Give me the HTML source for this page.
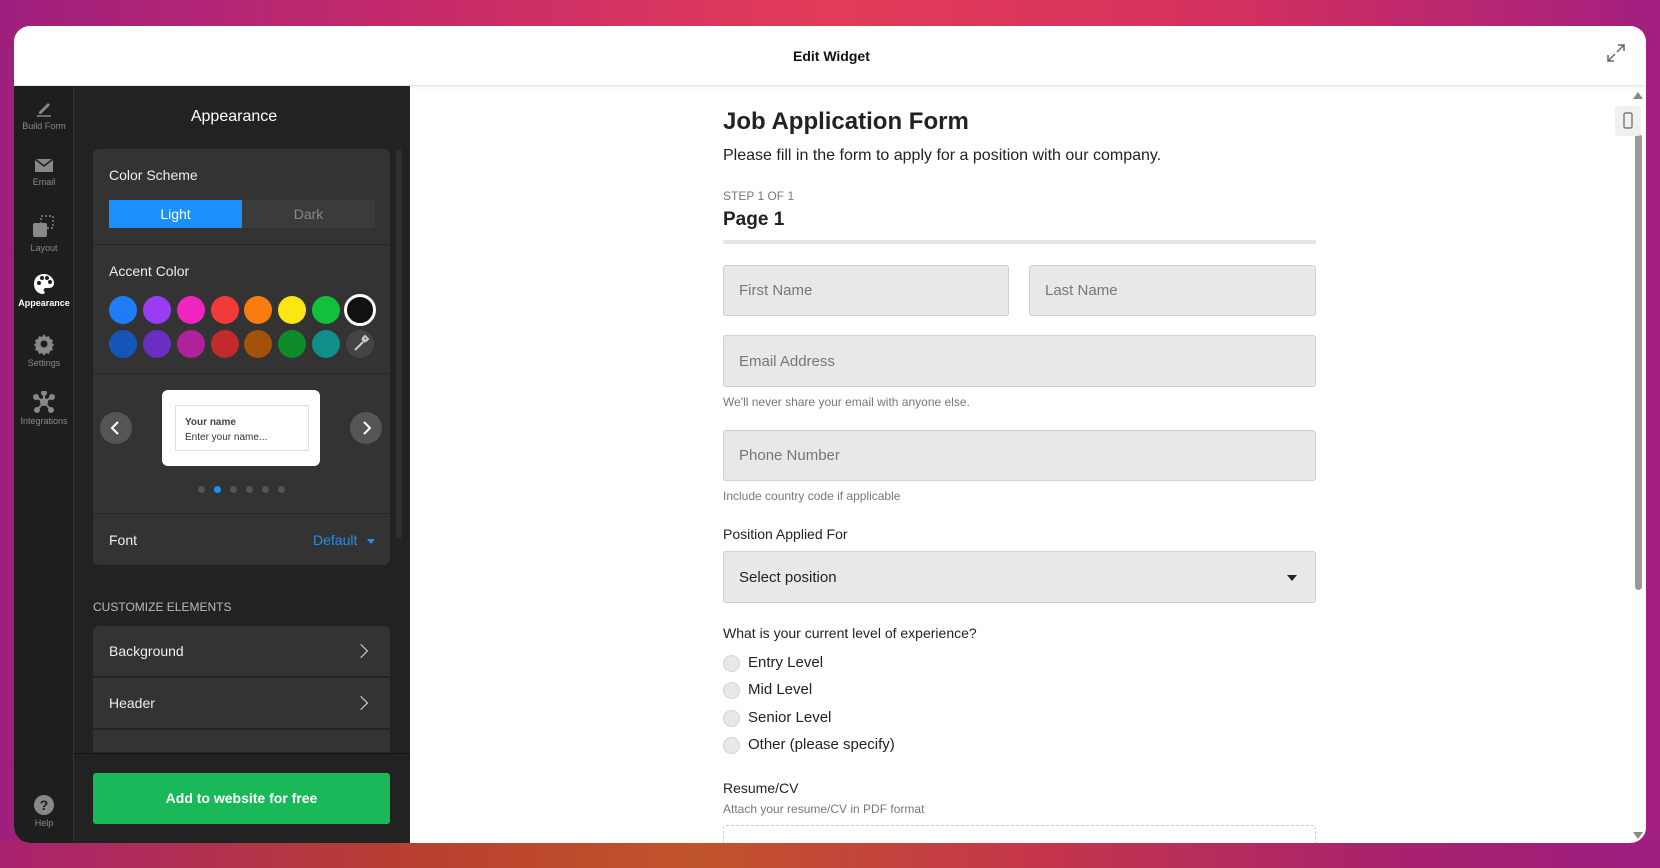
<!DOCTYPE html>
<html><head><meta charset="utf-8"><style>
*{box-sizing:border-box;margin:0;padding:0}
body{width:1660px;height:868px;overflow:hidden;font-family:"Liberation Sans",sans-serif;position:relative;
background:linear-gradient(90deg,#9e1f7e 0%,#c52b6a 25%,#e23c58 50%,#d2305f 75%,#a11f80 100%);}
.bot{position:absolute;left:0;top:840px;width:1660px;height:28px;background:linear-gradient(90deg,#a9226f 0%,#b8402f 25%,#c0542a 42%,#c5364a 62%,#a6216f 85%,#9d1e7f 100%)}
.card{position:absolute;left:14px;top:26px;width:1632px;height:817px;background:#fff;border-radius:16px;overflow:hidden}
.hdr{position:absolute;left:0;top:0;width:100%;height:60px;background:#fff;border-bottom:1px solid #e6e6e6;box-shadow:0 2px 3px rgba(0,0,0,.05)}
.hdr .t{position:absolute;left:779px;top:22px;font-size:14px;font-weight:bold;color:#111}
.side{position:absolute;left:0;top:60px;width:60px;height:757px;background:#1e1e1e;border-right:1px solid #333}
.si{position:absolute;width:60px;text-align:center;font-size:9px;color:#8a8a8a}
.si svg{display:block;margin:0 auto 3px}
.panel{position:absolute;left:60px;top:60px;width:336px;height:757px;background:#222}
.ptitle{position:absolute;left:0;width:320px;text-align:center;color:#fff;font-size:16px}
.box{position:absolute;left:19px;width:297px;background:#333;border-radius:6px}
.lbl{color:#eee;font-size:14px;position:absolute;left:16px}
.circ{position:absolute;width:28px;height:28px;border-radius:50%}
.row{position:absolute;left:19px;width:297px;height:51px;background:#333;color:#eee;font-size:14px;border-bottom:1px solid #262626}
.row span{position:absolute;left:16px;top:17px}
.row i{position:absolute;right:24px;top:20px;width:10px;height:10px;border-right:1.6px solid #ddd;border-top:1.6px solid #ddd;transform:rotate(45deg)}
.form{position:absolute;left:709px;top:0;width:600px;height:817px;color:#222}
.form div{white-space:nowrap}
.inp{position:absolute;background:#e8e8e8;border:1px solid #cfcfcf;border-radius:3px;color:#777;font-size:15px;padding-left:15px;display:flex;align-items:center}
.help{position:absolute;font-size:12px;color:#777}
.q{position:absolute;font-size:14px;color:#222}
.rad{position:absolute;left:0;font-size:15px;color:#222;width:300px;height:20px}
.rad b{position:absolute;left:0;top:1px;width:17px;height:17px;border-radius:50%;background:#e8e8e8;border:1px solid #d5d5d5}
.rad span{position:absolute;left:25px;top:0}
</style></head><body>
<div class="bot"></div>
<div class="card">
 <div class="hdr"><div class="t">Edit Widget</div>
  <svg style="position:absolute;left:1592px;top:17px" width="20" height="20" viewBox="0 0 20 20" fill="none" stroke="#666" stroke-width="1.5"><path d="M12 2h6v6M18 2l-7 7M8 18H2v-6M2 18l7-7"/></svg>
 </div>
 <div class="side">
  <div class="si" style="top:12px"><svg width="20" height="20" viewBox="0 0 20 20"><path d="M5 14l9-9 2 2-9 9H5z" fill="#888"/><path d="M3 18h14" stroke="#888" stroke-width="1.5"/></svg>Build Form</div>
  <div class="si" style="top:70px"><svg width="20" height="18" viewBox="0 0 20 18"><rect x="1" y="3" width="18" height="13" fill="#888"/><path d="M1 3l9 7 9-7" stroke="#1e1e1e" stroke-width="1.6" fill="none"/></svg>Email</div>
  <div class="si" style="top:128px"><svg width="26" height="26" viewBox="0 0 26 26"><rect x="2" y="9" width="14" height="14" rx="2" fill="#888"/><rect x="10" y="2" width="12" height="12" fill="none" stroke="#888" stroke-width="1.4" stroke-dasharray="2 2"/></svg>Layout</div>
  <div class="si" style="top:187px;color:#fff;font-weight:bold"><svg width="22" height="22" viewBox="0 0 22 22"><path d="M11 1C5 1 1 5 1 11s4 10 9 10c2 0 2-2 1-3-1-1 0-3 2-3h3c3 0 5-2 5-5 0-5-5-9-10-9z" fill="#fff"/><circle cx="6" cy="10" r="2" fill="#1e1e1e"/><circle cx="9" cy="5" r="2" fill="#1e1e1e"/><circle cx="14" cy="5" r="2" fill="#1e1e1e"/><circle cx="17" cy="9" r="2" fill="#1e1e1e"/></svg>Appearance</div>
  <div class="si" style="top:247px"><svg width="22" height="22" viewBox="0 0 22 22"><path d="M11 1l2 3 3-1 1 3 3 1-1 3 2 2-2 2 1 3-3 1-1 3-3-1-2 3-2-3-3 1-1-3-3-1 1-3-2-2 2-2-1-3 3-1 1-3 3 1z" fill="#888"/><circle cx="11" cy="11" r="3.5" fill="#1e1e1e"/></svg>Settings</div>
  <div class="si" style="top:305px"><svg width="22" height="22" viewBox="0 0 22 22" stroke="#888" stroke-width="2"><path d="M11 11L11 2M11 11L3 6M11 11L19 6M11 11L4 19M11 11L18 19"/><circle cx="11" cy="11" r="3" fill="#888"/><circle cx="11" cy="2" r="2" fill="#888"/><circle cx="3" cy="6" r="2" fill="#888"/><circle cx="19" cy="6" r="2" fill="#888"/><circle cx="4" cy="19" r="2" fill="#888"/><circle cx="18" cy="19" r="2" fill="#888"/></svg>Integrations</div>
  <div class="si" style="top:709px"><svg width="20" height="20" viewBox="0 0 20 20"><circle cx="10" cy="10" r="10" fill="#888"/><text x="10" y="15" font-size="14" font-weight="bold" text-anchor="middle" fill="#1e1e1e" font-family="Liberation Sans">?</text></svg><span style="font-size:9px">Help</span></div>
 </div>
 <div class="panel">
  <div class="ptitle" style="top:22px">Appearance</div>
  <div style="position:absolute;right:8px;top:63px;width:6px;height:390px;background:#2e2e2e;border-radius:3px"></div>
  <div class="box" style="top:63px;height:416px">
   <div class="lbl" style="top:18px">Color Scheme</div>
   <div style="position:absolute;left:16px;top:51px;width:266px;height:28px;background:#3b3b3b;border-radius:2px"></div>
   <div style="position:absolute;left:16px;top:51px;width:133px;height:28px;background:#1a90ff;color:#fff;font-size:14px;text-align:center;line-height:28px">Light</div>
   <div style="position:absolute;left:149px;top:51px;width:133px;height:28px;color:#888;font-size:14px;text-align:center;line-height:28px">Dark</div>
   <div style="position:absolute;left:0;top:95px;width:297px;height:1px;background:#262626"></div>
   <div class="lbl" style="top:114px">Accent Color</div>
   <div class="circ" style="left:16px;top:147px;background:#1e7cf8"></div>
   <div class="circ" style="left:50px;top:147px;background:#9b3cf5"></div>
   <div class="circ" style="left:84px;top:147px;background:#f024c0"></div>
   <div class="circ" style="left:118px;top:147px;background:#f23a3a"></div>
   <div class="circ" style="left:151px;top:147px;background:#f87c10"></div>
   <div class="circ" style="left:185px;top:147px;background:#fbe512"></div>
   <div class="circ" style="left:219px;top:147px;background:#12c03c"></div>
   <div class="circ" style="left:251px;top:145px;width:32px;height:32px;background:#111;border:3px solid #fff"></div>
   <div class="circ" style="left:16px;top:181px;background:#1455b8"></div>
   <div class="circ" style="left:50px;top:181px;background:#6a2fc2"></div>
   <div class="circ" style="left:84px;top:181px;background:#b0229a"></div>
   <div class="circ" style="left:118px;top:181px;background:#c22a2e"></div>
   <div class="circ" style="left:151px;top:181px;background:#a3520c"></div>
   <div class="circ" style="left:185px;top:181px;background:#0f8a2a"></div>
   <div class="circ" style="left:219px;top:181px;background:#0f8f8a"></div>
   <div class="circ" style="left:253px;top:181px;background:#444"><svg width="28" height="28" viewBox="0 0 28 28"><path d="M9 20l8-8M16 9l3 3M17 8l2-2 3 3-2 2z" stroke="#ccc" stroke-width="2"/></svg></div>
   <div style="position:absolute;left:0;top:224px;width:297px;height:1px;background:#262626"></div>
   <div style="position:absolute;left:69px;top:241px;width:158px;height:76px;background:#fff;border-radius:6px"></div>
   <div style="position:absolute;left:82px;top:256px;width:134px;height:46px;border:1px solid #ddd;font-size:10px;color:#333;padding:9px 9px;line-height:15px"><b style="color:#444">Your name</b><br>Enter your name...</div>
   <div class="circ" style="left:7px;top:263px;width:32px;height:32px;background:#555"><svg width="32" height="32" viewBox="0 0 32 32"><path d="M18 10l-6 6 6 6" stroke="#fff" stroke-width="2" fill="none"/></svg></div>
   <div class="circ" style="left:257px;top:263px;width:32px;height:32px;background:#555"><svg width="32" height="32" viewBox="0 0 32 32"><path d="M14 10l6 6-6 6" stroke="#fff" stroke-width="2" fill="none"/></svg></div>
   <div style="position:absolute;left:105px;top:337px">
    <span style="position:absolute;left:0;width:7px;height:7px;border-radius:50%;background:#555"></span>
    <span style="position:absolute;left:16px;width:7px;height:7px;border-radius:50%;background:#1a90ff"></span>
    <span style="position:absolute;left:32px;width:7px;height:7px;border-radius:50%;background:#555"></span>
    <span style="position:absolute;left:48px;width:7px;height:7px;border-radius:50%;background:#555"></span>
    <span style="position:absolute;left:64px;width:7px;height:7px;border-radius:50%;background:#555"></span>
    <span style="position:absolute;left:80px;width:7px;height:7px;border-radius:50%;background:#555"></span>
   </div>
   <div style="position:absolute;left:0;top:364px;width:297px;height:1px;background:#262626"></div>
   <div class="lbl" style="top:383px">Font</div>
   <div style="position:absolute;left:220px;top:383px;color:#2a8be8;font-size:14px">Default <span style="display:inline-block;margin-left:6px;border-left:4px solid transparent;border-right:4px solid transparent;border-top:5px solid #2a8be8;vertical-align:middle"></span></div>
  </div>
  <div style="position:absolute;left:19px;top:514px;font-size:12px;color:#bbb">CUSTOMIZE ELEMENTS</div>
  <div class="row" style="top:540px;border-radius:6px 6px 0 0"><span>Background</span><i></i></div>
  <div class="row" style="top:592px"><span>Header</span><i></i></div>
  <div class="row" style="top:644px;height:23px"></div>
  <div style="position:absolute;left:0;top:667px;width:336px;height:90px;background:#222;border-top:1px solid #111"></div>
  <div style="position:absolute;left:19px;top:687px;width:297px;height:51px;background:#19b95a;border-radius:3px;color:#fff;font-weight:bold;font-size:14px;text-align:center;line-height:51px">Add to website for free</div>
 </div>
 <div style="position:absolute;left:1618px;top:62px;width:14px;height:755px;background:#fff"></div>
 <div style="position:absolute;left:1619px;top:66px;border-left:5px solid transparent;border-right:5px solid transparent;border-bottom:7px solid #888"></div>
 <div style="position:absolute;left:1621px;top:108px;width:7px;height:456px;background:#999;border-radius:4px"></div>
 <div style="position:absolute;left:1619px;top:806px;border-left:5px solid transparent;border-right:5px solid transparent;border-top:7px solid #888"></div>
 <div style="position:absolute;left:1601px;top:80px;width:26px;height:30px;background:#f0f0f0;border-radius:3px"><svg width="26" height="30" viewBox="0 0 26 30"><rect x="9" y="7" width="8" height="15" rx="1.5" fill="none" stroke="#777" stroke-width="1.4"/></svg></div>
 <div class="form">
  <div style="position:absolute;left:0;top:82px;font-size:24px;font-weight:bold">Job Application Form</div>
  <div style="position:absolute;left:0;top:121px;font-size:16px">Please fill in the form to apply for a position with our company.</div>
  <div style="position:absolute;left:0;top:163px;font-size:12px;color:#777">STEP 1 OF 1</div>
  <div style="position:absolute;left:0;top:183px;font-size:19px;font-weight:bold">Page 1</div>
  <div style="position:absolute;left:0;top:214px;width:593px;height:4px;background:#e5e5e5"></div>
  <div class="inp" style="left:0;top:239px;width:286px;height:51px">First Name</div>
  <div class="inp" style="left:306px;top:239px;width:287px;height:51px">Last Name</div>
  <div class="inp" style="left:0;top:309px;width:593px;height:52px">Email Address</div>
  <div class="help" style="left:0;top:369px">We'll never share your email with anyone else.</div>
  <div class="inp" style="left:0;top:404px;width:593px;height:51px">Phone Number</div>
  <div class="help" style="left:0;top:463px">Include country code if applicable</div>
  <div class="q" style="left:0;top:500px">Position Applied For</div>
  <div class="inp" style="left:0;top:525px;width:593px;height:52px;color:#222">Select position<span style="position:absolute;right:18px;top:23px;border-left:5px solid transparent;border-right:5px solid transparent;border-top:6px solid #222"></span></div>
  <div class="q" style="left:0;top:599px">What is your current level of experience?</div>
  <div class="rad" style="top:628px"><b></b><span>Entry Level</span></div>
  <div class="rad" style="top:655px"><b></b><span>Mid Level</span></div>
  <div class="rad" style="top:683px"><b></b><span>Senior Level</span></div>
  <div class="rad" style="top:710px"><b></b><span>Other (please specify)</span></div>
  <div class="q" style="left:0;top:754px">Resume/CV</div>
  <div class="help" style="left:0;top:776px">Attach your resume/CV in PDF format</div>
  <div style="position:absolute;left:0;top:799px;width:593px;height:40px;border:1px dashed #ccc;border-radius:3px"></div>
 </div>
</div>
</body></html>
